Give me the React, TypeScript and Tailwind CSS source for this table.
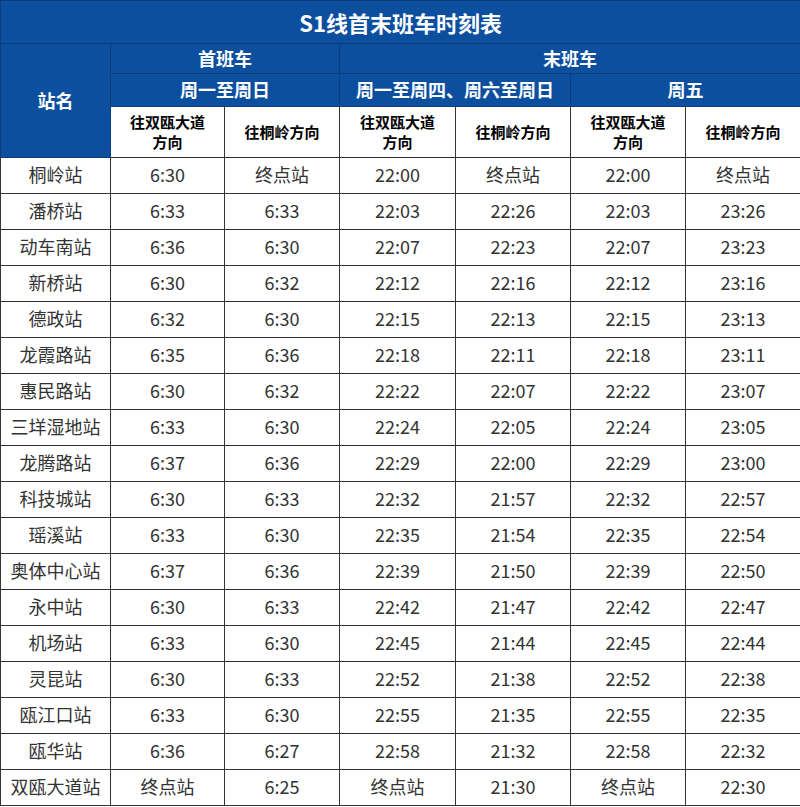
const rows: string[][] = [
  ['桐岭站', '6:30', '终点站', '22:00', '终点站', '22:00', '终点站'],
  ['潘桥站', '6:33', '6:33', '22:03', '22:26', '22:03', '23:26'],
  ['动车南站', '6:36', '6:30', '22:07', '22:23', '22:07', '23:23'],
  ['新桥站', '6:30', '6:32', '22:12', '22:16', '22:12', '23:16'],
  ['德政站', '6:32', '6:30', '22:15', '22:13', '22:15', '23:13'],
  ['龙霞路站', '6:35', '6:36', '22:18', '22:11', '22:18', '23:11'],
  ['惠民路站', '6:30', '6:32', '22:22', '22:07', '22:22', '23:07'],
  ['三垟湿地站', '6:33', '6:30', '22:24', '22:05', '22:24', '23:05'],
  ['龙腾路站', '6:37', '6:36', '22:29', '22:00', '22:29', '23:00'],
  ['科技城站', '6:30', '6:33', '22:32', '21:57', '22:32', '22:57'],
  ['瑶溪站', '6:33', '6:30', '22:35', '21:54', '22:35', '22:54'],
  ['奥体中心站', '6:37', '6:36', '22:39', '21:50', '22:39', '22:50'],
  ['永中站', '6:30', '6:33', '22:42', '21:47', '22:42', '22:47'],
  ['机场站', '6:33', '6:30', '22:45', '21:44', '22:45', '22:44'],
  ['灵昆站', '6:30', '6:33', '22:52', '21:38', '22:52', '22:38'],
  ['瓯江口站', '6:33', '6:30', '22:55', '21:35', '22:55', '22:35'],
  ['瓯华站', '6:36', '6:27', '22:58', '21:32', '22:58', '22:32'],
  ['双瓯大道站', '终点站', '6:25', '终点站', '21:30', '终点站', '22:30'],
];

const font = { fontFamily: '"Microsoft YaHei", "Noto Sans CJK SC", sans-serif' };

export default function App() {
  const head = 'border border-[#0a3c7c] bg-[#0d4f9f] text-white font-bold text-center';
  const sub = 'border border-[#333] bg-white text-black font-bold text-center text-[15px] leading-[20px] pb-[1px]';
  const cell = 'border border-[#333] text-center text-[18px] text-[#333] h-[36px] p-0 pb-[3px]';
  return (
    <div className="w-[800px] h-[807px] bg-white" style={font}>
      <table className="w-[800px] table-fixed border-collapse">
        <colgroup>
          <col className="w-[110px]" />
          <col className="w-[114px]" />
          <col className="w-[115px]" />
          <col className="w-[116px]" />
          <col className="w-[115px]" />
          <col className="w-[115px]" />
          <col className="w-[115px]" />
        </colgroup>
        <thead>
          <tr className="h-[43px]">
            <th colSpan={7} className={`${head} text-[22px] pt-[1px]`}>S1线首末班车时刻表</th>
          </tr>
          <tr className="h-[30px]">
            <th rowSpan={3} className={`${head} text-[18px]`}>站名</th>
            <th colSpan={2} className={`${head} text-[18px] pb-[1px]`}>首班车</th>
            <th colSpan={4} className={`${head} text-[18px] pb-[1px]`}>末班车</th>
          </tr>
          <tr className="h-[33px]">
            <th colSpan={2} className={`${head} text-[18px] pb-[1px]`}>周一至周日</th>
            <th colSpan={2} className={`${head} text-[18px] pb-[1px]`}>周一至周四、周六至周日</th>
            <th colSpan={2} className={`${head} text-[18px] pb-[1px]`}>周五</th>
          </tr>
          <tr className="h-[51px]">
            <th className={sub}>往双瓯大道<br />方向</th>
            <th className={sub}>往桐岭方向</th>
            <th className={sub}>往双瓯大道<br />方向</th>
            <th className={sub}>往桐岭方向</th>
            <th className={sub}>往双瓯大道<br />方向</th>
            <th className={sub}>往桐岭方向</th>
          </tr>
        </thead>
        <tbody>
          {rows.map((r) => (
            <tr key={r[0]} className="h-[36px]">
              {r.map((v, i) => (
                <td key={i} className={cell}>{v}</td>
              ))}
            </tr>
          ))}
        </tbody>
      </table>
    </div>
  );
}
